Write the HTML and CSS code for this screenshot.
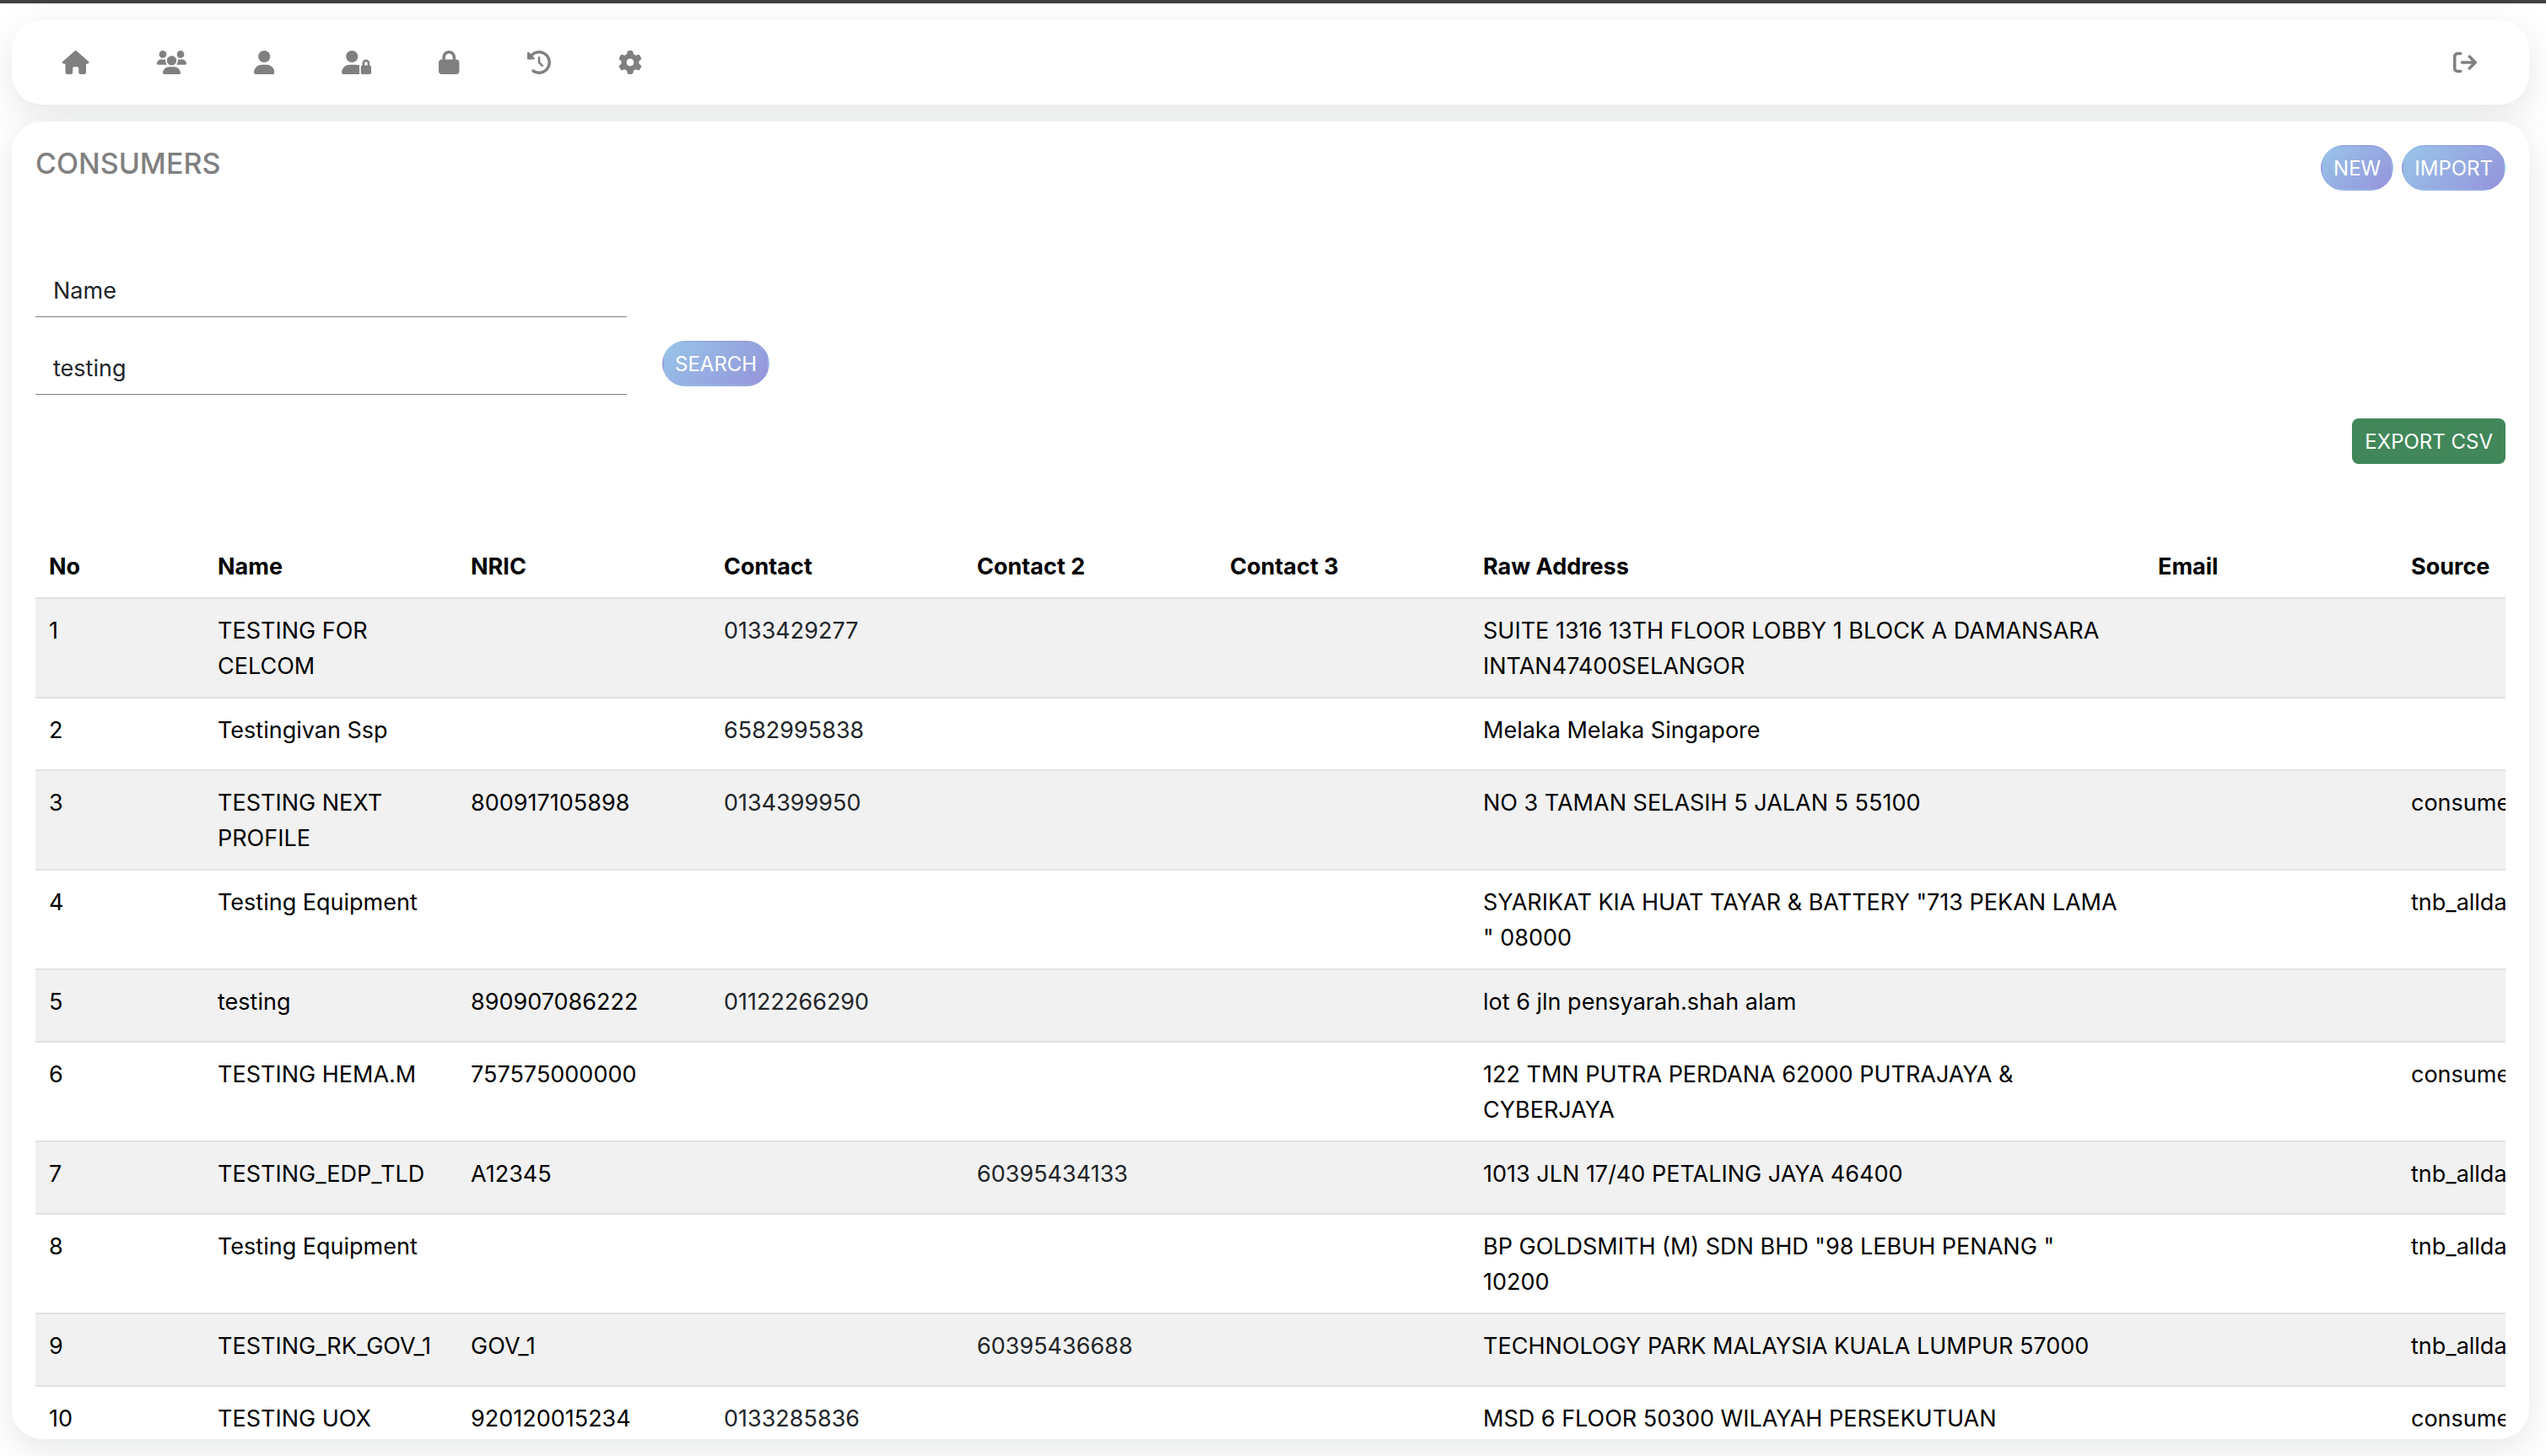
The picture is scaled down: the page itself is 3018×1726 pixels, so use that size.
FILE: index.html
```
<!DOCTYPE html>
<html lang="en">
<head>
    <meta charset="UTF-8">
    <meta name="viewport" content="width=device-width, initial-scale=1.0">
    <title>Consumers</title>
    <link rel="stylesheet" href="styles.css">
</head>

<body>
    <nav class="navbar">
        <a href="#" aria-label="Home"><svg viewBox="0 0 576 512"><path d="M575.8 255.5c0 18-15 32.1-32 32.1h-32l.7 160.2c0 2.7-.2 5.4-.5 8.1V472c0 22.1-17.9 40-40 40H456c-1.1 0-2.2 0-3.3-.1c-1.4 .1-2.8 .1-4.2 .1H416 392c-22.1 0-40-17.9-40-40V448 384c0-17.7-14.3-32-32-32H256c-17.7 0-32 14.3-32 32v64 24c0 22.1-17.9 40-40 40H160 128.1c-1.5 0-3-.1-4.5-.2c-1.2 .1-2.4 .2-3.6 .2H104c-22.1 0-40-17.9-40-40V360c0-.9 0-1.9 .1-2.8V287.6H32c-18 0-32-14-32-32.1c0-9 3-17 10-24L266.4 8c7-7 15-8 22-8s15 2 21 7L564.8 231.5c8 7 12 15 11 24z"/></svg></a>
        <a href="#" aria-label="Teams"><svg viewBox="0 0 640 512"><path d="M319.9 320c57.41 0 103.1-46.56 103.1-104c0-57.44-46.54-104-103.1-104c-57.41 0-103.1 46.56-103.1 104C215.9 273.4 262.5 320 319.9 320zM369.9 352H270.1C191.6 352 128 411.7 128 485.3C128 500.1 140.7 512 156.4 512h327.2C499.3 512 512 500.1 512 485.3C512 411.7 448.4 352 369.9 352zM512 160c44.18 0 80-35.82 80-80S556.2 0 512 0c-44.18 0-80 35.82-80 80S467.8 160 512 160zM183.9 216c0-5.449 .9824-10.63 1.609-15.91C174.6 194.1 162.6 192 149.9 192H88.08C39.44 192 0 233.8 0 285.3C0 295.6 7.887 304 17.62 304h199.5C196.7 280.2 183.9 249.7 183.9 216zM128 160c44.18 0 80-35.82 80-80S172.2 0 128 0C83.82 0 48 35.82 48 80S83.82 160 128 160zM551.9 192h-61.84c-12.8 0-24.88 3.037-35.86 8.24C454.8 205.5 455.8 210.6 455.8 216c0 33.71-12.78 64.21-33.16 88h199.7C632.1 304 640 295.6 640 285.3C640 233.8 600.6 192 551.9 192z"/></svg></a>
        <a href="#" aria-label="Users"><svg viewBox="0 0 448 512"><path d="M224 256c70.7 0 128-57.31 128-128s-57.3-128-128-128C153.3 0 96 57.31 96 128S153.3 256 224 256zM274.7 304H173.3C77.61 304 0 381.6 0 477.3c0 19.14 15.52 34.67 34.66 34.67h378.7C432.5 512 448 496.5 448 477.3C448 381.6 370.4 304 274.7 304z"/></svg></a>
        <a href="#" aria-label="User access"><svg viewBox="0 0 640 512"><path d="M224 256c70.7 0 128-57.31 128-128s-57.3-128-128-128C153.3 0 96 57.31 96 128S153.3 256 224 256zM274.7 304H173.3C77.61 304 0 381.6 0 477.3c0 19.14 15.52 34.67 34.66 34.67H392c-5-9-8-20-8-32V352c0-11 3-22 8-30C358 308 318 304 274.7 304z"/><path fill-rule="evenodd" d="M448 320v-48c0-44 36-80 80-80s80 36 80 80v48c18 0 32 14 32 32v128c0 18-14 32-32 32H448c-18 0-32-14-32-32V352c0-18 14-32 32-32zM496 320h64v-48c0-18-14-32-32-32s-32 14-32 32z"/></svg></a>
        <a href="#" aria-label="Permissions"><svg viewBox="0 0 448 512"><path d="M80 192V144C80 64.47 144.5 0 224 0C303.5 0 368 64.47 368 144V192H384C419.3 192 448 220.7 448 256V448C448 483.3 419.3 512 384 512H64C28.65 512 0 483.3 0 448V256C0 220.7 28.65 192 64 192H80zM144 192H304V144C304 99.82 268.2 64 224 64C179.8 64 144 99.82 144 144V192z"/></svg></a>
        <a href="#" aria-label="History"><svg viewBox="0 0 512 512"><path d="M256 0C397.4 0 512 114.6 512 256C512 397.4 397.4 512 256 512C201.7 512 151.2 495 109.7 466.1C95.2 455.1 91.64 436 101.8 421.5C111.9 407 131.8 403.5 146.3 413.6C177.4 435.3 215.2 448 256 448C362 448 448 362 448 256C448 149.1 362 64 256 64C202.1 64 155 85.46 120.2 120.2L151 151C166.1 166.1 155.4 192 134.1 192H24C10.75 192 0 181.3 0 168V57.94C0 36.56 25.85 25.85 40.97 40.97L74.98 74.98C121.3 28.69 185.3 0 255.1 0L256 0zM256 128C269.3 128 280 138.7 280 152V246.1L344.1 311C354.3 320.4 354.3 335.6 344.1 344.1C335.6 354.3 320.4 354.3 311 344.1L239 272.1C234.5 268.5 232 262.4 232 256V152C232 138.7 242.7 128 256 128V128z"/></svg></a>
        <a href="#" aria-label="Settings"><svg viewBox="0 0 512 512"><path d="M495.9 166.6C499.2 175.2 496.4 184.9 489.6 191.2L446.3 230.6C447.4 238.9 448 247.4 448 256C448 264.6 447.4 273.1 446.3 281.4L489.6 320.8C496.4 327.1 499.2 336.8 495.9 345.4C491.5 357.3 486.2 368.8 480.2 379.7L475.5 387.8C468.9 398.8 461.5 409.2 453.4 419.1C447.4 426.2 437.7 428.7 428.9 425.9L373.2 408.1C359.8 418.4 344.1 427 329.2 433.6L316.7 490.7C314.7 499.7 307.7 506.1 298.5 508.5C284.7 510.8 270.5 512 255.1 512C241.5 512 227.3 510.8 213.5 508.5C204.3 506.1 197.3 499.7 195.3 490.7L182.8 433.6C167 427 152.2 418.4 138.8 408.1L83.14 425.9C74.3 428.7 64.55 426.2 58.63 419.1C50.52 409.2 43.12 398.8 36.52 387.8L31.84 379.7C25.77 368.8 20.49 357.3 16.06 345.4C12.82 336.8 15.55 327.1 22.41 320.8L65.67 281.4C64.57 273.1 64 264.6 64 256C64 247.4 64.57 238.9 65.67 230.6L22.41 191.2C15.55 184.9 12.82 175.3 16.06 166.6C20.49 154.7 25.78 143.2 31.84 132.3L36.51 124.2C43.12 113.2 50.52 102.8 58.63 92.95C64.55 85.8 74.3 83.32 83.14 86.14L138.8 103.9C152.2 93.56 167 84.96 182.8 78.43L195.3 21.33C197.3 12.25 204.3 5.04 213.5 3.51C227.3 1.201 241.5 0 256 0C270.5 0 284.7 1.201 298.5 3.51C307.7 5.04 314.7 12.25 316.7 21.33L329.2 78.43C344.1 84.96 359.8 93.56 373.2 103.9L428.9 86.14C437.7 83.32 447.4 85.8 453.4 92.95C461.5 102.8 468.9 113.2 475.5 124.2L480.2 132.3C486.2 143.2 491.5 154.7 495.9 166.6V166.6zM256 336C300.2 336 336 300.2 336 255.1C336 211.8 300.2 175.1 256 175.1C211.8 175.1 176 211.8 176 255.1C176 300.2 211.8 336 256 336z"/></svg></a>
        <a href="#" class="logout" aria-label="Log out"><svg viewBox="0 0 512 512"><path d="M160 416H96c-17.67 0-32-14.33-32-32V128c0-17.67 14.33-32 32-32h64c17.67 0 32-14.33 32-32S177.7 32 160 32H96C42.98 32 0 74.98 0 128v256c0 53.02 42.98 96 96 96h64c17.67 0 32-14.33 32-32S177.7 416 160 416zM502.6 233.4l-128-128c-12.51-12.51-32.76-12.49-45.25 0c-12.5 12.5-12.5 32.75 0 45.25L402.8 224H192C174.3 224 160 238.3 160 256s14.31 32 32 32h210.8l-73.38 73.38c-12.5 12.5-12.5 32.75 0 45.25s32.75 12.5 45.25 0l128-128C515.1 266.1 515.1 245.9 502.6 233.4z"/></svg></a>
    </nav>

    <main class="card">
        <div class="card-head">
            <h1>CONSUMERS</h1>
            <div class="actions">
                <button type="button" class="btn">NEW</button>
                <button type="button" class="btn">IMPORT</button>
            </div>
        </div>

        <form class="search">
            <div class="fields">
                <select class="field" id="filter" aria-label="Search by">
                    <option value="name">Name</option>
                    <option value="nric">NRIC</option>
                    <option value="contact">Contact</option>
                </select>
                <input class="field" type="text" id="keyword" aria-label="Keyword" value="testing">
            </div>
            <button type="button" class="btn">SEARCH</button>
        </form>

        <div class="export">
            <button type="button" class="btn btn-green">EXPORT CSV</button>
        </div>

        <div class="table-wrap">
            <table>
                <colgroup>
                    <col class="col-no">
                    <col class="col">
                    <col class="col">
                    <col class="col">
                    <col class="col">
                    <col class="col">
                    <col class="col-address">
                    <col class="col">
                    <col class="col">
                </colgroup>
                <thead>
                    <tr>
                        <th>No</th>
                        <th>Name</th>
                        <th>NRIC</th>
                        <th>Contact</th>
                        <th>Contact 2</th>
                        <th>Contact 3</th>
                        <th>Raw Address</th>
                        <th>Email</th>
                        <th>Source</th>
                    </tr>
                </thead>
                <tbody>
                    <tr>
                        <td>1</td>
                        <td>TESTING FOR CELCOM</td>
                        <td></td>
                        <td><a href="#">0133429277</a></td>
                        <td></td>
                        <td></td>
                        <td>SUITE 1316 13TH FLOOR LOBBY 1 BLOCK A DAMANSARA INTAN47400SELANGOR</td>
                        <td></td>
                        <td></td>
                    </tr>
                    <tr>
                        <td>2</td>
                        <td>Testingivan Ssp</td>
                        <td></td>
                        <td><a href="#">6582995838</a></td>
                        <td></td>
                        <td></td>
                        <td>Melaka Melaka Singapore</td>
                        <td></td>
                        <td></td>
                    </tr>
                    <tr>
                        <td>3</td>
                        <td>TESTING NEXT PROFILE</td>
                        <td>800917105898</td>
                        <td><a href="#">0134399950</a></td>
                        <td></td>
                        <td></td>
                        <td>NO 3 TAMAN SELASIH 5 JALAN 5 55100</td>
                        <td></td>
                        <td>consumer</td>
                    </tr>
                    <tr>
                        <td>4</td>
                        <td>Testing Equipment</td>
                        <td></td>
                        <td></td>
                        <td></td>
                        <td></td>
                        <td>SYARIKAT KIA HUAT TAYAR &amp; BATTERY "713 PEKAN LAMA " 08000</td>
                        <td></td>
                        <td>tnb_alldata</td>
                    </tr>
                    <tr>
                        <td>5</td>
                        <td>testing</td>
                        <td>890907086222</td>
                        <td><a href="#">01122266290</a></td>
                        <td></td>
                        <td></td>
                        <td>lot 6 jln pensyarah.shah alam</td>
                        <td></td>
                        <td></td>
                    </tr>
                    <tr>
                        <td>6</td>
                        <td>TESTING HEMA.M</td>
                        <td>757575000000</td>
                        <td></td>
                        <td></td>
                        <td></td>
                        <td>122 TMN PUTRA PERDANA 62000 PUTRAJAYA &amp; CYBERJAYA</td>
                        <td></td>
                        <td>consumer</td>
                    </tr>
                    <tr>
                        <td>7</td>
                        <td>TESTING_EDP_TLD</td>
                        <td>A12345</td>
                        <td></td>
                        <td><a href="#">60395434133</a></td>
                        <td></td>
                        <td>1013 JLN 17/40 PETALING JAYA 46400</td>
                        <td></td>
                        <td>tnb_alldata</td>
                    </tr>
                    <tr>
                        <td>8</td>
                        <td>Testing Equipment</td>
                        <td></td>
                        <td></td>
                        <td></td>
                        <td></td>
                        <td>BP GOLDSMITH (M) SDN BHD "98 LEBUH PENANG "<br>10200</td>
                        <td></td>
                        <td>tnb_alldata</td>
                    </tr>
                    <tr>
                        <td>9</td>
                        <td>TESTING_RK_GOV_1</td>
                        <td>GOV_1</td>
                        <td></td>
                        <td><a href="#">60395436688</a></td>
                        <td></td>
                        <td>TECHNOLOGY PARK MALAYSIA KUALA LUMPUR 57000</td>
                        <td></td>
                        <td>tnb_alldata</td>
                    </tr>
                    <tr>
                        <td>10</td>
                        <td>TESTING UOX</td>
                        <td>920120015234</td>
                        <td><a href="#">0133285836</a></td>
                        <td></td>
                        <td></td>
                        <td>MSD 6 FLOOR 50300 WILAYAH PERSEKUTUAN</td>
                        <td></td>
                        <td>consumer</td>
                    </tr>
                </tbody>
            </table>
        </div>
    </main>
</body>
</html>
```
FILE: styles.css
```
*{
    box-sizing: border-box;
}
body{
    margin: 0;
    height: 100vh;
    padding: 20px 20px 20px 14px;
    border-top: 4px solid #404040;
    display: flex;
    flex-direction: column;
    gap: 20px;
    overflow: hidden;
    background-color: white;
    color: black;
    font-family: Inter, sans-serif;
    font-size: 27px;
    line-height: 42px;
}
.navbar,.card{
    background-color: white;
    border-radius: 36px;
    box-shadow: 0 12px 40px rgba(95, 105, 112, 0.16);
}
.navbar{
    display: flex;
    align-items: center;
    gap: 80px;
    padding: 36px 62px 36px 60px;
}
.navbar a{
    display: flex;
}
.navbar svg{
    height: 28px;
    fill: gray;
}
.navbar .logout{
    margin-left: auto;
}
.card{
    flex: 1;
    min-height: 0;
    padding: 28px 28px 0;
    overflow: hidden;
}
.card-head{
    display: flex;
    justify-content: space-between;
    align-items: flex-start;
}
h1{
    margin: 0;
    font-size: 34px;
    font-weight: 500;
    line-height: 44px;
    color: gray;
}
.actions{
    display: flex;
    gap: 10px;
}
.btn{
    height: 54px;
    padding: 2px 13px 0;
    border: 2px solid transparent;
    border-radius: 27px;
    background-image: linear-gradient(135deg, #98c5e9, #9593db);
    color: white;
    font-family: inherit;
    font-size: 24px;
    line-height: 36px;
}
.btn-green{
    border-radius: 8px;
    border-color: #41875a;
    background: #41875a;
}
.search{
    display: flex;
    align-items: flex-end;
    gap: 42px;
    margin-top: 86px;
}
.search .btn{
    margin-bottom: 10px;
}
.fields{
    width: 24%;
    max-width: 701px;
    display: flex;
    flex-direction: column;
    gap: 28px;
}
.field{
    appearance: none;
    width: 100%;
    height: 64px;
    padding: 2px 21px 0;
    border: 0;
    border-bottom: 1px solid gray;
    border-radius: 0;
    background-color: transparent;
    color: #212529;
    font-family: inherit;
    font-size: 27px;
    outline: none;
}
.export{
    display: flex;
    justify-content: flex-end;
    margin-top: 28px;
}
.table-wrap{
    margin-top: 84px;
    overflow: hidden;
}
table{
    width: 3100px;
    table-layout: fixed;
    border-spacing: 0;
}
.col-no{
    width: 200px;
}
.col{
    width: 300px;
}
.col-address{
    width: 800px;
}
th,td{
    padding: 17px 16px 15px;
    border-bottom: 2px solid #dee2e6;
    text-align: left;
    vertical-align: top;
}
th{
    font-weight: 700;
}
td{
    height: 86px;
}
tbody tr:nth-child(odd){
    background-color: #f1f1f1;
}
td a{
    color: #212529;
    text-decoration: none;
}
```
